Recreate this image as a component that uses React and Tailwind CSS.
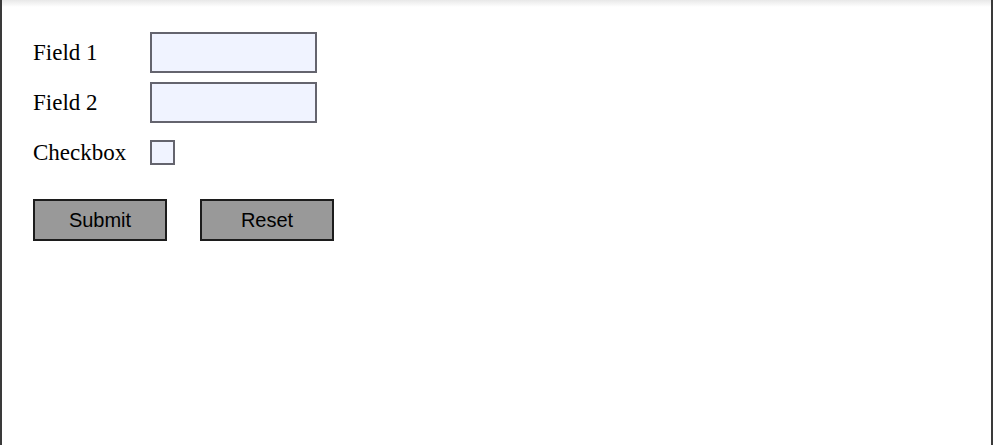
import React from 'react';

const Row = ({ label, children }) => {
  return (
    <div className="flex items-center h-[41px]">
      <span className="w-[117px] text-[23px] leading-none text-black">{label}</span>
      {children}
    </div>
  );
};

const App = () => {
  return (
    <div className="h-[445px] w-[993px] bg-white border-x-2 border-[#3a3a3a] relative overflow-hidden font-['Liberation_Serif',serif]">
      <div className="absolute inset-x-0 top-0 h-[7px] bg-gradient-to-b from-[#e8e8e8] to-white" />
      <div className="relative flex flex-col pt-[32px] pl-[31px]">
        <div className="flex flex-col gap-[9px]">
          <Row label="Field 1">
            <input
              type="text"
              className="w-[167px] h-[41px] bg-[#f0f3ff] border-2 border-[#64646e] outline-none"
            />
          </Row>
          <Row label="Field 2">
            <input
              type="text"
              className="w-[167px] h-[41px] bg-[#f0f3ff] border-2 border-[#64646e] outline-none"
            />
          </Row>
          <Row label="Checkbox">
            <span className="block w-[25px] h-[25px] bg-[#f0f3ff] border-2 border-[#64646e] mt-[-1px]" />
          </Row>
        </div>
        <div className="flex gap-[33px] mt-[26px]">
          <button className="w-[134px] h-[42px] bg-[#999999] border-2 border-[#1c1c1c] text-[20px] text-black font-['Liberation_Sans',sans-serif]">
            Submit
          </button>
          <button className="w-[134px] h-[42px] bg-[#999999] border-2 border-[#1c1c1c] text-[20px] text-black font-['Liberation_Sans',sans-serif]">
            Reset
          </button>
        </div>
      </div>
    </div>
  );
};

export default App;
